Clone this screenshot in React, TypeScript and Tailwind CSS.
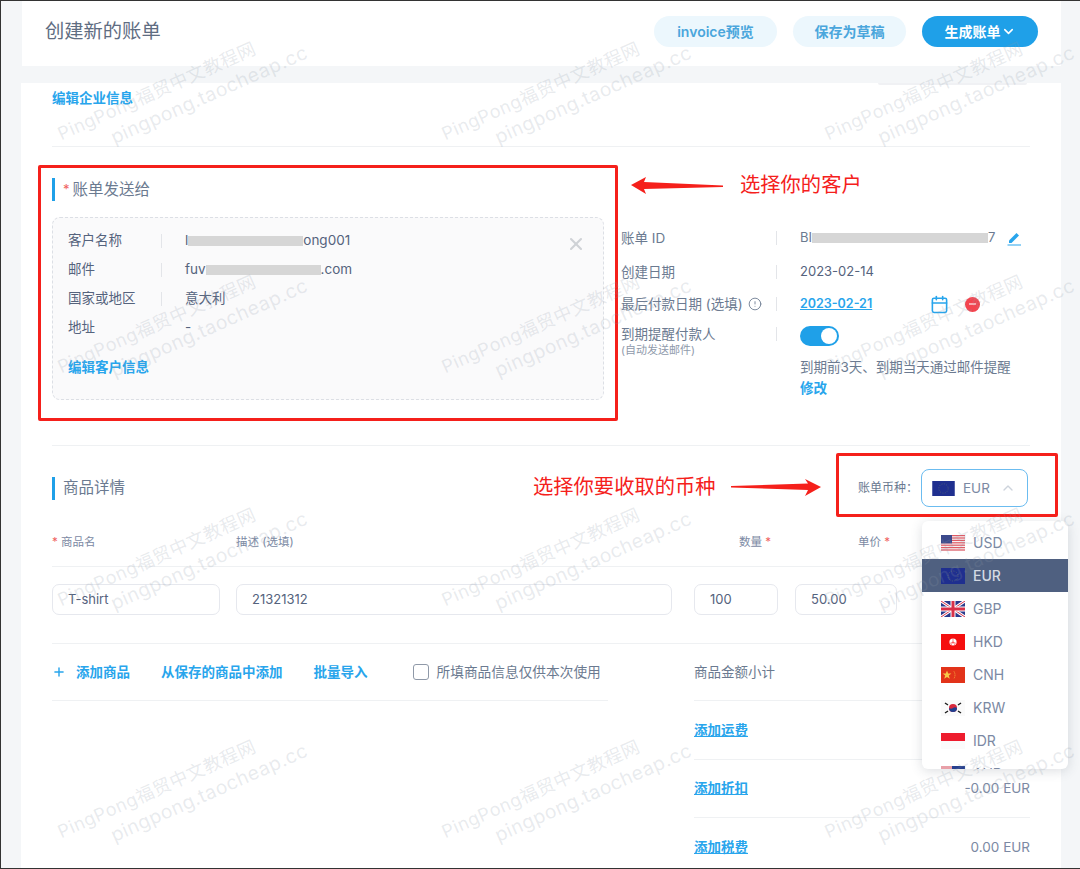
import { AlertCircle, Calendar, ChevronDown, ChevronUp, Plus, X } from "lucide-react";
import type { ReactNode } from "react";

const FONT = "font-['Inter','Noto_Sans_CJK_SC',sans-serif]";

function FlagUS() {
  return (
    <svg viewBox="0 0 24 16" className="h-full w-full">
      <rect width="24" height="16" fill="#f5f0f2" />
      {[0, 2.4, 4.8, 7.2, 9.6, 12, 14.4].map((y) => (
        <rect key={y} y={y} width="24" height="1.2" fill="#e05a64" />
      ))}
      <rect width="11" height="8.4" fill="#3c4a8c" />
    </svg>
  );
}

function FlagEU() {
  return (
    <svg viewBox="0 0 24 16" className="h-full w-full">
      <rect width="24" height="16" fill="#1f2f8f" />
      <circle cx="12" cy="8" r="5" fill="none" stroke="#5a6a70" strokeWidth="0.8" strokeDasharray="1 1.6" />
    </svg>
  );
}

function FlagGB() {
  return (
    <svg viewBox="0 0 24 16" className="h-full w-full">
      <rect width="24" height="16" fill="#2a3a8c" />
      <path d="M0 0L24 16M24 0L0 16" stroke="#fff" strokeWidth="3" />
      <path d="M0 0L24 16M24 0L0 16" stroke="#d8324a" strokeWidth="1" />
      <path d="M12 0V16M0 8H24" stroke="#fff" strokeWidth="5" />
      <path d="M12 0V16M0 8H24" stroke="#d8324a" strokeWidth="3" />
    </svg>
  );
}

function FlagHK() {
  return (
    <svg viewBox="0 0 24 16" className="h-full w-full">
      <rect width="24" height="16" fill="#f50f0f" />
      <circle cx="12" cy="8" r="3.6" fill="#fff" />
      <path d="M12 8L12 4.6M12 8L15 9.4M12 8L10 11M12 8L14 11M12 8L9 9.4" stroke="#f50f0f" strokeWidth="0.5" />
    </svg>
  );
}

function FlagCN() {
  return (
    <svg viewBox="0 0 24 16" className="h-full w-full">
      <rect width="24" height="16" fill="#e2331a" />
      <polygon points="6,3.5 7.2,6.6 10.4,6.6 7.8,8.6 8.8,11.8 6,9.9 3.2,11.8 4.2,8.6 1.6,6.6 4.8,6.6" fill="#f7c948" />
      <path d="M13 4.5Q15 8 13 11.5" fill="none" stroke="#f7c948" strokeWidth="0.8" strokeDasharray="1 1" />
    </svg>
  );
}

function FlagKR() {
  return (
    <svg viewBox="0 0 24 16" className="h-full w-full">
      <rect width="24" height="16" fill="#fafafa" />
      <circle cx="12" cy="8" r="4" fill="#d8283c" />
      <path d="M8 8A4 4 0 0 0 16 8Q14 6.6 12 8T8 8Z" fill="#1f3f8f" />
      <path d="M4 3L7 5M17 5L20 3M4 13L7 11M17 11L20 13" stroke="#222" strokeWidth="1.5" />
    </svg>
  );
}

function FlagID() {
  return (
    <svg viewBox="0 0 24 16" className="h-full w-full">
      <rect width="24" height="16" fill="#fbfbfb" />
      <rect width="24" height="8" fill="#ee1c2e" />
    </svg>
  );
}

function FlagAU() {
  return (
    <svg viewBox="0 0 24 16" className="h-full w-full">
      <rect width="24" height="16" fill="#27408f" />
      <rect width="11" height="4" fill="#e8a0a8" />
    </svg>
  );
}

const CURRENCIES = [
  { code: "USD", flag: <FlagUS /> },
  { code: "EUR", flag: <FlagEU />, active: true },
  { code: "GBP", flag: <FlagGB /> },
  { code: "HKD", flag: <FlagHK /> },
  { code: "CNH", flag: <FlagCN /> },
  { code: "KRW", flag: <FlagKR /> },
  { code: "IDR", flag: <FlagID /> },
  { code: "AUD", flag: <FlagAU /> },
];

const WATERMARK_COLUMNS = [57, 441, 824];
const WATERMARK_ROWS = [140, 373, 606, 838];

function SectionTitle({ required, children }: { required?: boolean; children: ReactNode }) {
  return (
    <div className="flex h-[23px] items-center border-l-[3.5px] border-[#1fa0e8] pl-[8px] text-[15.5px] text-[#6b7a90]">
      {required && <span className="mr-[3px] text-[13px] text-[#f0625f]">*</span>}
      {children}
    </div>
  );
}

function ClientRow({ label, children }: { label: string; children: ReactNode }) {
  return (
    <div className="flex h-[29px] items-center text-[13.5px] text-[#55637d]">
      <span className="w-[93px] shrink-0">{label}</span>
      <span className="h-[14px] w-px bg-[#e3e5e9]" />
      <span className="ml-[23px] flex items-center text-[13.5px]">{children}</span>
    </div>
  );
}

function MetaLabel({ children }: { children: ReactNode }) {
  return <div className="flex w-[155px] shrink-0 items-center self-start text-[13.5px] text-[#6b7a90]">{children}</div>;
}

function Redacted({ width }: { width: number }) {
  return <span className="inline-block h-[10px] bg-[#d6d6d6]" style={{ width }} />;
}

function TextBox({ width, value }: { width: number; value: string }) {
  return (
    <div
      className="flex h-[31px] shrink-0 items-center rounded-[7px] border border-[#e6e8ee] pl-[15px] text-[13px] text-[#55637d]"
      style={{ width }}
    >
      {value}
    </div>
  );
}

function ArrowLeft() {
  return (
    <svg width="94" height="20" viewBox="0 0 94 20" className="absolute left-[629px] top-[175px]">
      <polygon points="1,9 16,1 14,6 93,9.5 93,11 14,13 16,18" fill="#f5201b" />
    </svg>
  );
}

function ArrowRight() {
  return (
    <svg width="92" height="20" viewBox="0 0 92 20" className="absolute left-[729px] top-[476px]">
      <polygon points="1,9 78,6.5 75,2 91,10 75,19 78,13 1,10.5" fill="#f5201b" />
    </svg>
  );
}

export default function App() {
  return (
    <div className={`relative box-border h-[869px] w-[1080px] overflow-hidden border-y border-l border-[#333] bg-[#f4f6f8] ${FONT}`}>
      {/* header */}
      <header className="ml-[21px] flex h-[65px] w-[1039px] items-center justify-between bg-white pb-[4px] pl-[23px] pr-[23px]">
        <h1 className="text-[19.3px] font-normal text-[#5f6d82]">创建新的账单</h1>
        <div className="flex gap-[16px] text-[14px] font-semibold">
          <button className="h-[31px] w-[123px] rounded-full bg-[#ecf7fd] text-[#4aa6dc]">invoice预览</button>
          <button className="h-[31px] w-[113px] rounded-full bg-[#ecf7fd] text-[#4aa6dc]">保存为草稿</button>
          <button className="flex h-[31px] w-[116px] items-center justify-center rounded-full bg-[#1fa0e8] text-white">
            生成账单
            <ChevronDown size={15} strokeWidth={2.5} />
          </button>
        </div>
      </header>

      {/* main card */}
      <main className="relative ml-[20px] mt-[17px] h-[800px] w-[1040px] bg-white pl-[31px] pr-[31px]">
        {/* edge of a menu cut off behind the header */}
        <div className="absolute left-[857px] top-0 h-[2px] w-[149px] rounded-b-[3px] bg-[#f0f1f4]" />

        <div className="flex h-[30px] items-center pt-[1px] text-[13.5px] font-semibold text-[#28a5ec]">编辑企业信息</div>
        <div className="mt-[33px] border-t border-[#eff1f3]" />

        <section className="flex h-[299px] border-b border-[#eff1f3]">
          <div className="w-[552px] shrink-0 pt-[31px]">
            <SectionTitle required>账单发送给</SectionTitle>
            <div className="relative mt-[16px] h-[183px] rounded-[8px] border border-dashed border-[#dcdfe5] bg-[#fafafb] pl-[15px] pt-[8px]">
              <ClientRow label="客户名称">
                l<Redacted width={115} />ong001
              </ClientRow>
              <ClientRow label="邮件">
                fuv<Redacted width={115} />.com
              </ClientRow>
              <ClientRow label="国家或地区">意大利</ClientRow>
              <div className="flex h-[29px] items-center text-[13.5px] text-[#55637d]">
                <span className="w-[117px]">地址</span>-
              </div>
              <div className="mt-[15px] flex h-[20px] items-center text-[13.5px] font-semibold text-[#28a5ec]">编辑客户信息</div>
              <X size={20} strokeWidth={2.5} className="absolute right-[17px] top-[16px] text-[#cfd2d6]" />
            </div>
          </div>

          <div className="ml-[17px] flex-1 pt-[78px]">
            <div className="flex h-[26px] items-center">
              <MetaLabel>
                <span className="leading-[26px]">账单 ID</span>
              </MetaLabel>
              <span className="h-[14px] w-px bg-[#e3e5e9]" />
              <span className="ml-[23px] flex items-center text-[13px] text-[#6b7a90]">
                BI<Redacted width={176} />7
              </span>
              <svg width="16" height="16" viewBox="0 0 16 16" className="ml-[11px]">
                <path d="M3 10.5L10.5 3L13 5.5L5.5 13H3Z" fill="#28a5ec" />
                <path d="M1.5 15H15" stroke="#28a5ec" strokeWidth="1" />
              </svg>
            </div>
            <div className="mt-[8px] flex h-[26px] items-center">
              <MetaLabel>
                <span className="leading-[26px]">创建日期</span>
              </MetaLabel>
              <span className="h-[14px] w-px bg-[#e3e5e9]" />
              <span className="ml-[23px] text-[13px] text-[#55637d]">2023-02-14</span>
            </div>
            <div className="mt-[6px] flex h-[26px] items-center">
              <MetaLabel>
                <span className="leading-[26px]">最后付款日期 (选填)</span>
                <AlertCircle size={14} strokeWidth={1.5} className="ml-[5px] text-[#6b7a90]" />
              </MetaLabel>
              <span className="h-[14px] w-px bg-[#e3e5e9]" />
              <span className="ml-[23px] w-[130px] text-[12.5px] font-semibold text-[#28a5ec] underline">2023-02-21</span>
              <Calendar size={19} strokeWidth={2} className="text-[#28a5ec]" />
              <span className="ml-[16px] flex h-[15px] w-[15px] items-center justify-center rounded-full bg-[#f4444f]">
                <span className="h-[1.5px] w-[7px] bg-[#f9a9ae]" />
              </span>
            </div>
            <div className="mt-[9px] flex">
              <MetaLabel>
                <div className="leading-[16px]">
                  到期提醒付款人
                  <div className="text-[11px] text-[#8f9aab]">(自动发送邮件)</div>
                </div>
              </MetaLabel>
              <span className="mt-[1px] h-[14px] w-px bg-[#e3e5e9]" />
              <div className="ml-[23px]">
                <div className="flex h-[20px] w-[39px] items-center justify-end rounded-full bg-[#1fa0e8] pr-[2px]">
                  <span className="h-[16px] w-[16px] rounded-full bg-white" />
                </div>
                <div className="mt-[11px] whitespace-nowrap text-[13.5px] leading-[21px] text-[#6b7a90]">
                  到期前3天、到期当天通过邮件提醒
                  <div className="font-semibold text-[#28a5ec]">修改</div>
                </div>
              </div>
            </div>
          </div>
        </section>

        <div className="mt-[23px] flex h-[38px] items-center justify-between">
          <SectionTitle>商品详情</SectionTitle>
          <div className="mr-[2px] flex items-center">
            <span className="mr-[3px] text-[12px] text-[#6b7a90]">账单币种：</span>
            <div className="flex h-[38px] w-[107px] items-center rounded-[8px] border border-[#6bbcf0] pl-[10px]">
              <span className="h-[15px] w-[23px]">
                <FlagEU />
              </span>
              <span className="ml-[8px] text-[13.5px] text-[#7b89a3]">EUR</span>
              <ChevronUp size={16} className="ml-[10px] text-[#cdd3dc]" />
            </div>
          </div>
        </div>

        <div className="mt-[26px] flex h-[20px] items-center text-[11.5px] text-[#7b89a3]">
          <span className="w-[184px]">
            <span className="text-[#f0625f]">*</span> 商品名
          </span>
          <span className="w-[503px]">描述 (选填)</span>
          <span className="w-[119px]">
            数量 <span className="text-[#f0625f]">*</span>
          </span>
          <span>
            单价 <span className="text-[#f0625f]">*</span>
          </span>
        </div>
        <div className="mt-[13px] border-t border-[#eff1f3]" />

        <div className="mt-[17px] flex">
          <TextBox width={168} value="T-shirt" />
          <div className="ml-[16px]">
            <TextBox width={436} value="21321312" />
          </div>
          <div className="ml-[22px]">
            <TextBox width={84} value="100" />
          </div>
          <div className="ml-[17px]">
            <TextBox width={102} value="50.00" />
          </div>
        </div>
        <div className="mt-[28px] border-t border-[#eff1f3]" />

        <div className="flex">
          <div className="flex h-[57px] w-[556px] shrink-0 items-center border-b border-[#eff1f3] text-[13.5px]">
            <Plus size={14} strokeWidth={2.5} className="text-[#28a5ec]" />
            <span className="ml-[10px] font-semibold text-[#28a5ec]">添加商品</span>
            <span className="ml-[31px] font-semibold text-[#28a5ec]">从保存的商品中添加</span>
            <span className="ml-[31px] font-semibold text-[#28a5ec]">批量导入</span>
            <span className="ml-[45px] h-[16px] w-[16px] rounded-[3px] border border-[#8f99a8]" />
            <span className="ml-[8px] text-[13.7px] text-[#6b7a90]">所填商品信息仅供本次使用</span>
          </div>
          <div className="ml-[86px] flex-1 text-[13.5px]">
            <div className="flex h-[57px] items-center border-b border-[#eff1f3] text-[#6b7a90]">商品金额小计</div>
            <div className="flex h-[59px] items-center border-b border-[#eff1f3] font-semibold text-[#28a5ec] underline">添加运费</div>
            <div className="flex h-[58px] items-center justify-between border-b border-[#eff1f3]">
              <span className="font-semibold text-[#28a5ec] underline">添加折扣</span>
              <span className="text-[13.5px] text-[#7b89a3]">-0.00 EUR</span>
            </div>
            <div className="flex h-[58px] items-center justify-between">
              <span className="font-semibold text-[#28a5ec] underline">添加税费</span>
              <span className="text-[13.5px] text-[#7b89a3]">0.00 EUR</span>
            </div>
          </div>
        </div>
      </main>

      {/* currency dropdown */}
      <div className="absolute left-[921px] top-[520px] h-[248px] w-[146px] overflow-hidden rounded-[6px] bg-white pt-[5px] shadow-[0_2px_12px_rgba(60,70,90,0.18)]">
        {CURRENCIES.map((item) => (
          <div
            key={item.code}
            className={
              item.active
                ? "flex h-[33px] items-center bg-[#4f6080] pl-[19px] text-[14px] font-medium text-[#d5dae3]"
                : "flex h-[33px] items-center pl-[19px] text-[14px] text-[#7b89a3]"
            }
          >
            <span className="h-[16px] w-[24px] shrink-0">{item.flag}</span>
            <span className="ml-[8px]">{item.code}</span>
          </div>
        ))}
      </div>

      {/* red annotations drawn over the screenshot */}
      <div className="absolute left-[37px] top-[164px] h-[256px] w-[580px] rounded-[2px] border-[3px] border-[#f5201b]" />
      <div className="absolute left-[835px] top-[452px] h-[64px] w-[222px] rounded-[2px] border-[3px] border-[#f5201b]" />
      <ArrowLeft />
      <ArrowRight />
      <div className="absolute left-[739px] top-[169px] text-[20.3px] leading-[30px] text-[#f5201b]">选择你的客户</div>
      <div className="absolute left-[532px] top-[471px] text-[20.3px] leading-[30px] text-[#f5201b]">选择你要收取的币种</div>

      {/* watermarks */}
      {WATERMARK_ROWS.flatMap((top) =>
        WATERMARK_COLUMNS.map((left) => (
          <div
            key={`${left}-${top}`}
            className="pointer-events-none absolute origin-top-left -rotate-[24deg] whitespace-nowrap leading-[24px] tracking-[0.03em] text-[#8a97a6]/20"
            style={{ left: left - 4, top: top - 17 }}
          >
            <div className="text-[18px]">PingPong福贸中文教程网</div>
            <div className="ml-[47px] text-[19.2px]">pingpong.taocheap.cc</div>
          </div>
        )),
      )}
    </div>
  );
}
